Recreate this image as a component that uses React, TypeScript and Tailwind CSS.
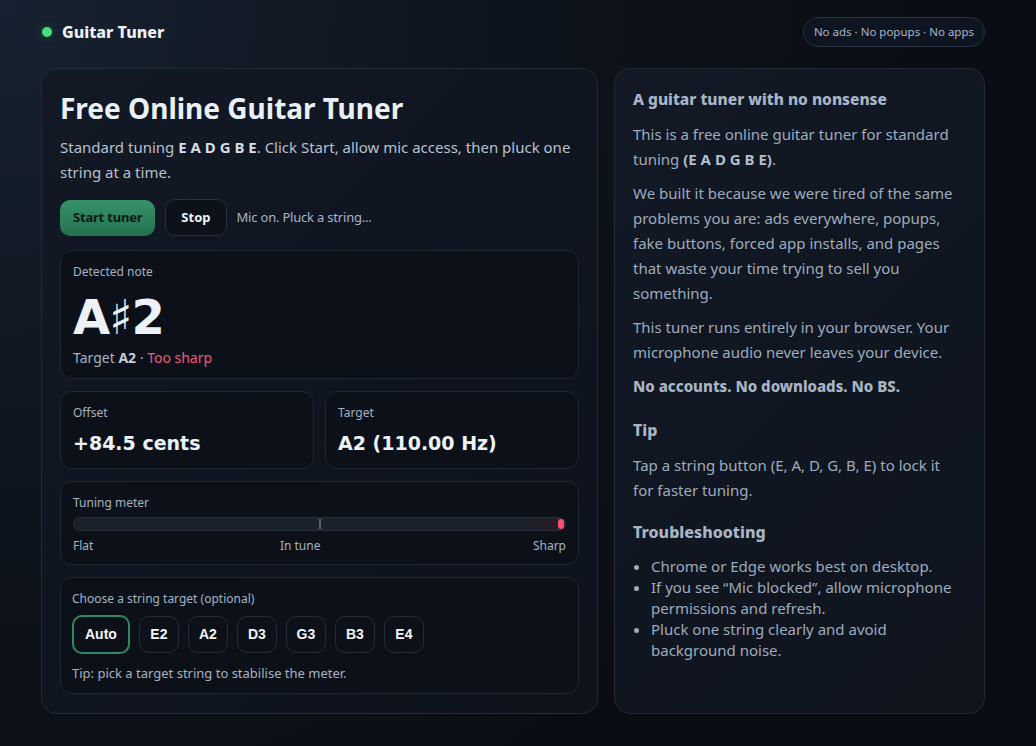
import React from 'react';

const STRINGS = ['E2', 'A2', 'D3', 'G3', 'B3', 'E4'];

const heavy = { fontFamily: '"DejaVu Sans", Verdana, sans-serif' };
const arialBlack = { fontFamily: '"Liberation Sans", Arial, sans-serif', fontWeight: 900 };

export default function App() {
  return (
    <div
      className="min-h-[746px] w-full bg-[radial-gradient(circle_at_0%_0%,#172131_0%,#0e141d_40%,#0a0d13_75%)] text-[#c4cdd9]"
      style={{ fontFamily: '"Noto Sans", "Open Sans", sans-serif' }}
    >
      <div className="ml-[41px] w-[944px] pt-[16px] pb-[32px]">
        {/* Header */}
        <header className="flex items-center justify-between h-[31px]">
          <div className="flex items-center gap-[10px] pl-[1px]">
            <span className="w-[10px] h-[10px] rounded-full bg-[#4ade80] shadow-[0_0_8px_#22c55e66]" />
            <span className="text-[16px] font-extrabold text-[#eef2f7]">Guitar Tuner</span>
          </div>
          <div className="h-[30px] px-[10px] flex items-center rounded-full border border-[#263040] bg-[#0f1520] text-[11.5px] text-[#a9b6c8]">
            No ads · No popups · No apps
          </div>
        </header>

        <main className="mt-[21px] grid grid-cols-[557px_371px] gap-[16px]">
          {/* Left card */}
          <section className="rounded-[16px] border border-[#222a37] bg-[linear-gradient(135deg,#121925,#0d121b)] px-[18px] pt-[20px] pb-[19px]">
            <h1 className="text-[28px] leading-[38px] font-bold text-[#eaf0f7]">Free Online Guitar Tuner</h1>
            <p className="mt-[8px] text-[15px] leading-[25px] text-[#b7c1ce]">
              Standard tuning <b className="text-[#d6dde7]">E A D G B E</b>. Click Start, allow mic access, then pluck one string at a time.
            </p>
            <div className="mt-[14px] flex items-center gap-[10px]">
              <button className="h-[36px] px-[13px] rounded-[10px] bg-[linear-gradient(180deg,#36936a,#23704e)] text-[13px] font-bold text-[#0d1a14] tracking-[-0.2px]">Start tuner</button>
              <button className="h-[37px] px-[15px] rounded-[10px] border border-[#263040] bg-[#0d121a] text-[13px] font-bold text-[#f1f4f8]">Stop</button>
              <span className="text-[13px] text-[#a9b4c3] tracking-[-0.2px]">Mic on. Pluck a string...</span>
            </div>

            {/* Detected note */}
            <div className="mt-[14px] rounded-[12px] border border-[#1f2733] bg-[#0c1119] px-[12px] pt-[13px] pb-[10px]">
              <div className="text-[12px] leading-[16px] text-[#a6b1c0]">Detected note</div>
              <div className="mt-[10px] text-[48px] leading-[54px] font-black text-[#edf2f8] tracking-[-1px]" style={heavy}>A♯2</div>
              <div className="mt-[4px] text-[14px] leading-[20px] text-[#a6b1c0]">
                Target <b className="text-[#c5cedb]">A2</b> · <span className="text-[#f0577a]">Too sharp</span>
              </div>
            </div>

            {/* Offset / Target */}
            <div className="mt-[12px] grid grid-cols-2 gap-[11px]">
              <div className="rounded-[12px] border border-[#1f2733] bg-[#0c1119] px-[12px] pt-[13px] pb-[12px]">
                <div className="text-[12px] leading-[16px] text-[#a6b1c0]">Offset</div>
                <div className="mt-[9px] text-[19px] leading-[26px] font-bold text-[#edf2f8]" style={heavy}>+84.5 cents</div>
              </div>
              <div className="rounded-[12px] border border-[#1f2733] bg-[#0c1119] px-[12px] pt-[13px] pb-[12px]">
                <div className="text-[12px] leading-[16px] text-[#a6b1c0]">Target</div>
                <div className="mt-[9px] text-[19px] leading-[26px] font-bold text-[#edf2f8]" style={heavy}>A2 (110.00 Hz)</div>
              </div>
            </div>

            {/* Meter */}
            <div className="mt-[12px] rounded-[12px] border border-[#1f2733] bg-[#0c1119] px-[12px] pt-[13px] pb-[10px]">
              <div className="text-[12px] leading-[16px] text-[#a6b1c0]">Tuning meter</div>
              <div className="relative mt-[6px] h-[14px] rounded-full border border-[#262e3b] bg-[#1b212b]">
                <div className="absolute left-1/2 top-[1px] bottom-[1px] w-[2px] -ml-[1px] bg-[#5a6372]" />
                <div className="absolute right-0 top-0 bottom-0 w-[40px] rounded-r-full bg-[linear-gradient(90deg,transparent,#2a1c26)]" />
                <div className="absolute right-[1px] top-[1px] w-[6px] h-[10px] rounded-full bg-[#ff4d73]" />
              </div>
              <div className="mt-[7px] flex justify-between text-[12px] leading-[16px] text-[#a6b1c0]">
                <span>Flat</span>
                <span className="-ml-[26px]">In tune</span>
                <span>Sharp</span>
              </div>
            </div>

            {/* Strings */}
            <div className="mt-[12px] rounded-[12px] border border-[#1f2733] bg-[#0c1119] px-[11px] pt-[13px] pb-[11px]">
              <div className="text-[12px] leading-[16px] text-[#a6b1c0]">Choose a string target (optional)</div>
              <div className="mt-[8px] flex items-center gap-[8px]">
                <button className="h-[39px] px-[11px] rounded-[10px] border-2 border-[#2f8a5f] bg-[#0c1119] text-[14px] text-[#f1f4f8]" style={arialBlack}>Auto</button>
                {STRINGS.map(s => (
                  <button
                    key={s}
                    className="h-[37px] w-[40px] rounded-[10px] border border-[#232b37] bg-[#0c1119] text-[14px] text-[#f1f4f8] ml-[1px]"
                    style={arialBlack}
                  >
                    {s}
                  </button>
                ))}
              </div>
              <div className="mt-[10px] text-[13px] leading-[18px] text-[#a6b1c0]">Tip: pick a target string to stabilise the meter.</div>
            </div>
          </section>

          {/* Right card */}
          <aside className="rounded-[16px] border border-[#222a37] bg-[linear-gradient(135deg,#121925,#0f141d)] pl-[18px] pr-[24px] pt-[20px] pb-[20px] text-[15px] leading-[25px] text-[#9eabbd]">
            <h2 className="text-[15.5px] leading-[21px] font-extrabold text-[#a9b5c6]">A guitar tuner with no nonsense</h2>
            <p className="mt-[12px]">This is a free online guitar tuner for standard tuning <b className="text-[#b3bfcf]">(E A D G B E)</b>.</p>
            <p className="mt-[9px]">We built it because we were tired of the same problems you are: ads everywhere, popups, fake buttons, forced app installs, and pages that waste your time trying to sell you something.</p>
            <p className="mt-[9px]">This tuner runs entirely in your browser. Your microphone audio never leaves your device.</p>
            <p className="mt-[9px] font-extrabold text-[#a9b5c6]">No accounts. No downloads. No BS.</p>
            <h3 className="mt-[20px] text-[16px] leading-[22px] font-extrabold text-[#a9b5c6]">Tip</h3>
            <p className="mt-[12px]">Tap a string button (E, A, D, G, B, E) to lock it for faster tuning.</p>
            <h3 className="mt-[18px] text-[16px] leading-[22px] font-extrabold text-[#a9b5c6]">Troubleshooting</h3>
            <ul className="mt-[13px] list-disc pl-[18px] leading-[21px]">
              <li>Chrome or Edge works best on desktop.</li>
              <li>If you see “Mic blocked”, allow microphone permissions and refresh.</li>
              <li>Pluck one string clearly and avoid background noise.</li>
            </ul>
          </aside>
        </main>
      </div>
    </div>
  );
}
